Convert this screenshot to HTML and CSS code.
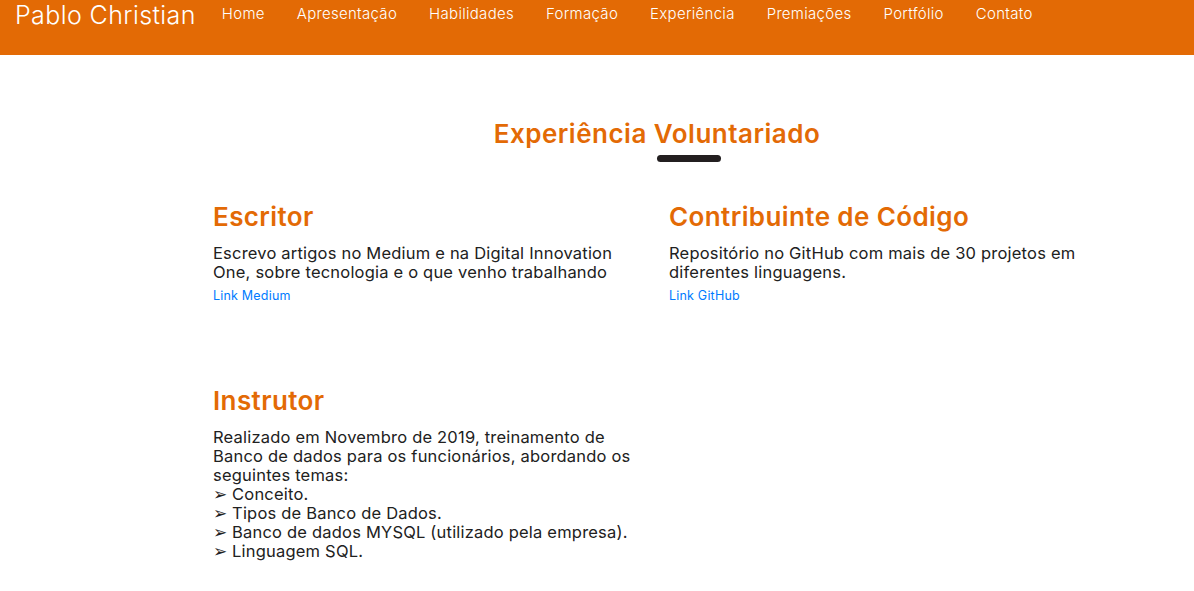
FILE: index.html
```html
<!DOCTYPE html>
<html lang="pt-BR">
<head>
<meta charset="utf-8">
<title>Pablo Christian</title>
<link rel="stylesheet" href="styles.css">
</head>
<body>
<header class="topbar">
  <a class="brand" href="#">Pablo Christian</a>
  <nav class="nav">
    <a href="#">Home</a>
    <a href="#">Apresentação</a>
    <a href="#">Habilidades</a>
    <a href="#">Formação</a>
    <a href="#">Experiência</a>
    <a href="#">Premiações</a>
    <a href="#">Portfólio</a>
    <a href="#">Contato</a>
  </nav>
</header>
<main class="section">
  <div class="section-title">
    <h2>Experiência Voluntariado</h2>
    <span class="bar"></span>
  </div>
  <div class="grid">
    <article class="item">
      <h3>Escritor</h3>
      <p>Escrevo artigos no Medium e na Digital Innovation One, sobre tecnologia e o que venho trabalhando</p>
      <a class="link" href="#">Link Medium</a>
    </article>
    <article class="item">
      <h3>Contribuinte de Código</h3>
      <p>Repositório no GitHub com mais de 30 projetos em diferentes linguagens.</p>
      <a class="link" href="#">Link GitHub</a>
    </article>
    <article class="item item-wide">
      <h3>Instrutor</h3>
      <p>Realizado em Novembro de 2019, treinamento de Banco de dados para os funcionários, abordando os seguintes temas:<br>
      ➢ Conceito.<br>
      ➢ Tipos de Banco de Dados.<br>
      ➢ Banco de dados MYSQL (utilizado pela empresa).<br>
      ➢ Linguagem SQL.</p>
    </article>
  </div>
</main>
</body>
</html>
```

FILE: styles.css
```css
* { box-sizing: border-box; }
html, body { margin: 0; padding: 0; }
body {
  font-family: Inter, "Open Sans", sans-serif;
  color: #212121;
  background: #fff;
}
a { text-decoration: none; }

.topbar {
  height: 55px;
  background: #e36a05;
  display: flex;
  align-items: flex-start;
  padding-left: 15px;
}
.brand {
  color: #fff;
  font-size: 25px;
  line-height: 30px;
  font-weight: 300;
  letter-spacing: 0.4px;
}
.nav {
  display: flex;
  margin-left: 10px;
  padding-top: 4px;
}
.nav a {
  color: #fff;
  font-size: 15px;
  line-height: 20px;
  font-weight: 300;
  letter-spacing: 0.3px;
  padding: 0 16px;
}

.section {
  padding: 62px 0 0 213px;
}
.section-title {
  width: 912px;
  display: flex;
  flex-direction: column;
  align-items: center;
}
.section-title h2 {
  margin: 0;
  font-size: 26px;
  line-height: 34px;
  font-weight: 600;
  letter-spacing: 0.5px;
  color: #e36a05;
  transform: translateX(-12px);
}
.bar {
  display: block;
  width: 64px;
  height: 7px;
  border-radius: 4px;
  background: #231f20;
  margin: 4px 0 0 40px;
}
.grid {
  display: grid;
  grid-template-columns: 456px 456px;
  row-gap: 82px;
  margin-top: 40px;
}
.item h3 {
  margin: 0 0 12px;
  font-size: 26px;
  line-height: 30px;
  font-weight: 600;
  letter-spacing: 0.4px;
  color: #e36a05;
}
.item p {
  margin: 0;
  font-size: 16.5px;
  line-height: 19px;
  letter-spacing: 0.2px;
  width: 426px;
}
.link {
  display: block;
  margin-top: 6px;
  font-size: 12.5px;
  line-height: 16px;
  letter-spacing: 0.2px;
  color: #007bff;
}
```
